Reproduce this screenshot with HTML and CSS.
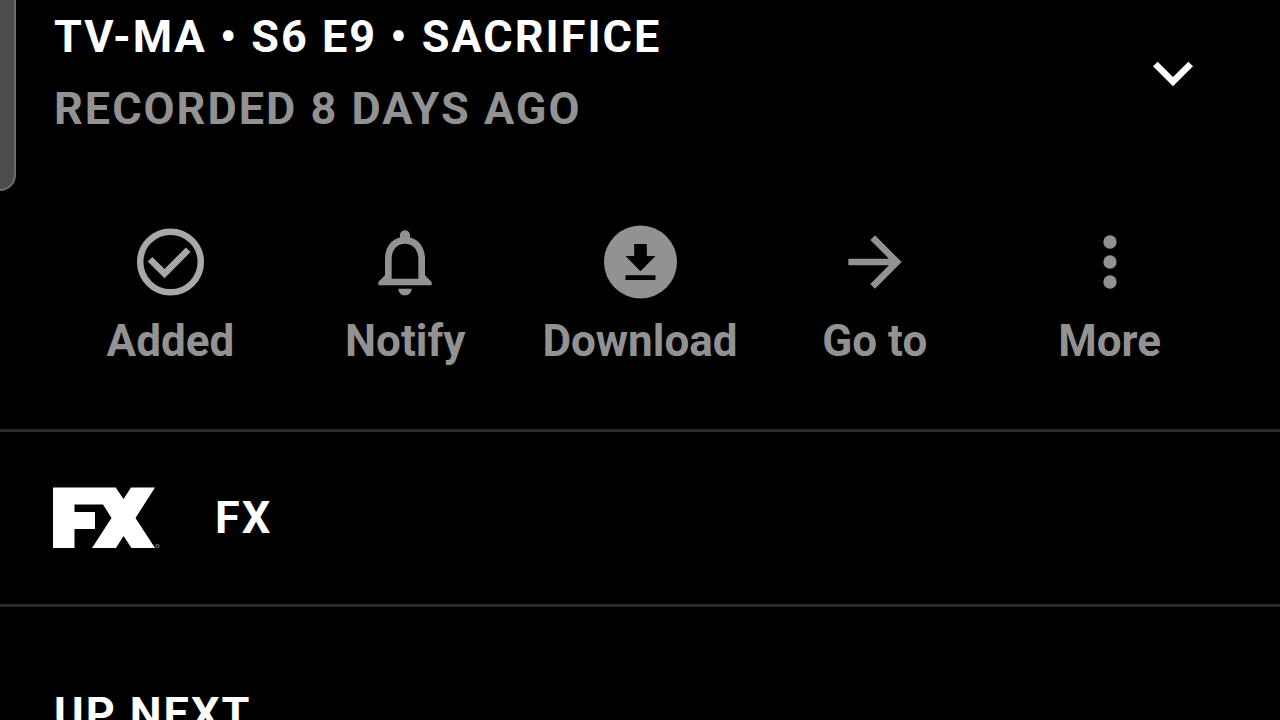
FILE: index.html
```
<!DOCTYPE html>
<html lang="en">
<head>
    <meta charset="UTF-8">
    <meta name="viewport" content="width=device-width, initial-scale=1.0">
    <title>Sacrifice</title>
    <link rel="stylesheet" href="styles.css">
</head>
<body>
<div class="edge-panel"></div>

<!-- Episode info -->
<header class="episode">
    <div class="episode-text">
        <h1 class="heading">TV-MA • S6 E9 • SACRIFICE</h1>
        <p class="heading recorded">RECORDED 8 DAYS AGO</p>
    </div>
    <button class="expand" aria-label="Show details">
        <svg class="icon" viewBox="0 0 24 24"><path d="M16.59 8.59L12 13.17 7.41 8.59 6 10l6 6 6-6z"/></svg>
    </button>
</header>

<!-- Actions -->
<nav class="actions">
    <button class="action">
        <svg class="icon icon-added" viewBox="0 0 80 80">
            <circle cx="40.5" cy="40" r="30.3"/>
            <path d="M20 37.2L34.5 51.6 58.2 27.8"/>
        </svg>
        <span>Added</span>
    </button>
    <button class="action">
        <svg class="icon" viewBox="0 0 24 24"><path d="M12 22c1.1 0 2-.9 2-2h-4c0 1.1.9 2 2 2zm6-6v-5c0-3.07-1.63-5.64-4.5-6.32V4c0-.83-.67-1.5-1.5-1.5s-1.5.67-1.5 1.5v.68C7.64 5.36 6 7.92 6 11v5l-2 2v1h16v-1l-2-2zm-2 1H8v-6c0-2.48 1.51-4.5 4-4.5s4 2.02 4 4.5v6z"/></svg>
        <span>Notify</span>
    </button>
    <button class="action">
        <svg class="icon" viewBox="0 0 80 80">
            <circle cx="40.5" cy="40" r="36.5"/>
            <path class="cutout" d="M34.2 22h12.6v12h8.7l-15 15.3-15-15.3h8.7zM25.5 53.3h30V58h-30z"/>
        </svg>
        <span>Download</span>
    </button>
    <button class="action">
        <svg class="icon" viewBox="0 0 24 24"><path d="M12 4l-1.41 1.41L16.17 11H4v2h12.17l-5.58 5.59L12 20l8-8z"/></svg>
        <span>Go to</span>
    </button>
    <button class="action">
        <svg class="icon" viewBox="0 0 24 24">
            <circle cx="12" cy="6" r="2"/>
            <circle cx="12" cy="12" r="2"/>
            <circle cx="12" cy="18" r="2"/>
        </svg>
        <span>More</span>
    </button>
</nav>

<!-- Network -->
<a class="network" href="#fx">
    <svg class="network-logo" viewBox="0 0 108 62">
        <path d="M0 .5h62.7l7.8 11.5L78 .5h24L82.5 31 102 61H78.5l-8-12L63 61H39l19.5-30L50 17.5H21.5V25H42v17H21.5v19H0z"/>
        <circle class="registered" cx="104.5" cy="59" r="1.6"/>
    </svg>
    <span class="heading">FX</span>
</a>

<!-- Up next -->
<section class="up-next">
    <h2 class="heading">UP NEXT</h2>
</section>
</body>
</html>
```
FILE: styles.css
```
body {
    margin: 0;
    height: 100vh;
    overflow: hidden;
    background-color: #000;
    color: #fff;
    font-family: Roboto, sans-serif;
}
button {
    padding: 0;
    border: none;
    background: none;
    color: inherit;
    font: inherit;
    cursor: pointer;
}
.heading {
    margin: 0;
    font-size: 45px;
    font-weight: 700;
    line-height: 72px;
    letter-spacing: 2px;
}
.icon {
    display: block;
    width: 80px;
    height: 80px;
    fill: currentColor;
}
.edge-panel {
    position: absolute;
    top: 0;
    left: 0;
    box-sizing: border-box;
    width: 16px;
    height: 191px;
    background-color: #4c4c4c;
    border: 2px solid #6e6e6e;
    border-width: 0 2px 2px 0;
    border-bottom-right-radius: 16px;
}
.episode {
    display: flex;
    justify-content: space-between;
    align-items: center;
    padding: 1px 67px 0 54px;
}
.recorded {
    color: #929292;
}
.actions {
    display: grid;
    grid-template-columns: repeat(5, 1fr);
    padding: 77px 53px 62px;
    border-bottom: 3px solid #2a2a2a;
    color: #929292;
}
.action {
    display: flex;
    flex-direction: column;
    align-items: center;
    gap: 13px;
    font-size: 44px;
    font-weight: 700;
    line-height: 52px;
    white-space: nowrap;
}
.icon-added {
    fill: none;
    stroke: #a8a8a8;
    stroke-width: 6.5;
}
.cutout {
    fill: #000;
}
.network {
    display: flex;
    align-items: center;
    gap: 54px;
    padding: 50px 53px;
    border-bottom: 3px solid #2a2a2a;
    color: #fff;
    text-decoration: none;
}
.network-logo {
    width: 108px;
    height: 62px;
    fill: currentColor;
}
.registered {
    fill: none;
    stroke: #888;
}
.up-next {
    padding: 71px 54px;
}
```
